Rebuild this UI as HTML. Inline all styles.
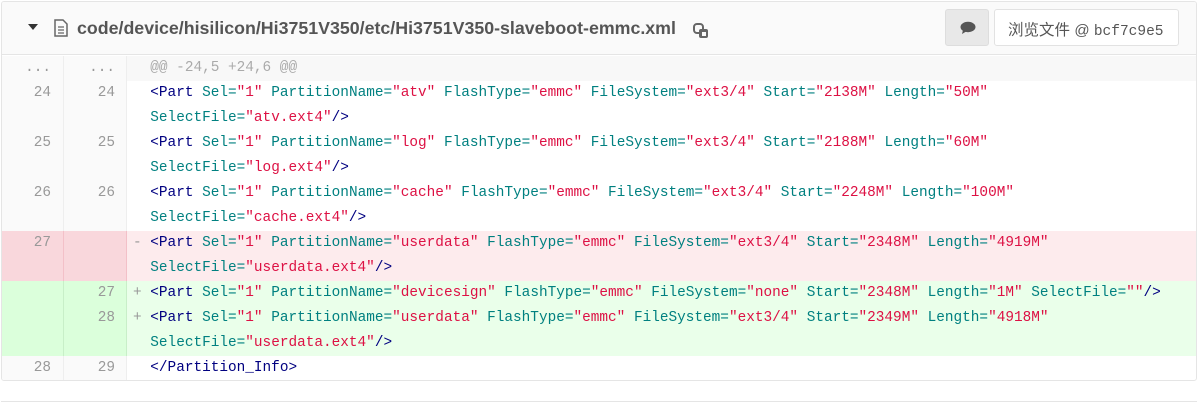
<!DOCTYPE html>
<html><head><meta charset="utf-8"><style>
*{margin:0;padding:0;box-sizing:border-box}
body{width:1198px;height:403px;background:#fff;font-family:"Liberation Sans",sans-serif;position:relative;overflow:hidden}
.box{position:absolute;left:1px;top:1px;width:1196px;height:380px;border:1px solid #e5e5e5;border-radius:3px;overflow:hidden}
.hdr{position:absolute;left:0;top:0;width:100%;height:53px;background:#fafafa;border-bottom:1px solid #e5e5e5}
.title{position:absolute;left:75px;top:16px;font-weight:bold;font-size:17.8px;color:#555;white-space:nowrap}
.tri{position:absolute;left:26px;top:22px;width:0;height:0;border-left:5px solid transparent;border-right:5px solid transparent;border-top:6px solid #333}
.btn1{position:absolute;left:943px;top:7px;width:44px;height:37px;background:#e8e8e8;border:1px solid #ddd;border-radius:3px}
.btn2{position:absolute;left:992px;top:7px;width:185px;height:37px;background:#fff;border:1px solid #e2e2e2;border-radius:3px;font-size:15.5px;color:#555;padding:8px 0 0 13px;white-space:nowrap;font-family:"Liberation Sans","Noto Sans CJK SC",sans-serif}
.btn2 .m{font-family:"Liberation Mono",monospace;font-size:14.5px}
.row{position:absolute;left:0;width:100%;height:25px;font-family:"Liberation Mono",monospace;font-size:14.4px;line-height:25px;white-space:pre}
.g1,.g2{position:absolute;top:0;height:25px;color:#999;text-align:right;border-right:1px solid #eee;background:#fafafa}
.g1{left:0;width:62px;padding-right:12px}
.g2{left:62px;width:63px;padding-right:11px}
.c{position:absolute;left:131px;top:0}
.t{color:#000080}.a{color:#008080}.s{color:#dd1144}.p{color:#999}
.del{background:#fdebed}.del .g1,.del .g2{background:#f9d7dc;border-right-color:#f3c0c8;color:#999}
.add{background:#eaffea}.add .g1,.add .g2{background:#dbffdb;border-right-color:#c8efc8;color:#999}
.hunk{background:#f8f8f8}.hunk .c{color:#aaa}
</style></head><body>
<div class="box">
<div class="hdr">
<div class="tri"></div>
<svg style="position:absolute;left:52px;top:17px" width="14" height="18" viewBox="0 0 14 18"><path d="M1 1h8l4 4v12H1z" fill="none" stroke="#666" stroke-width="1.5"/><path d="M4 8h6M4 11h6M4 14h6" stroke="#666" stroke-width="1.3"/></svg>
<div class="title">code/device/hisilicon/Hi3751V350/etc/Hi3751V350-slaveboot-emmc.xml</div>
<svg style="position:absolute;left:691px;top:21px" width="17" height="16" viewBox="0 0 17 16"><rect x="1" y="1" width="9" height="9" rx="3" fill="none" stroke="#666" stroke-width="2"/><rect x="6" y="6" width="9" height="9" rx="2" fill="#666"/><rect x="9" y="9" width="4" height="4" fill="#fafafa"/></svg>
<div class="btn1"><svg style="position:absolute;left:14px;top:11px" width="16" height="14" viewBox="0 0 16 14"><ellipse cx="8" cy="6" rx="7.5" ry="5.2" fill="#555"/><path d="M3 9l-1 4 5-3z" fill="#555"/></svg></div>
<div class="btn2">浏览文件 <span style="font-size:15px">@</span> <span class="m">bcf7c9e5</span></div>
</div>
<div class="row hunk" style="top:54px"><div class="g1">...</div><div class="g2">...</div><div class="c">  @@ -24,5 +24,6 @@</div></div>
<div class="row" style="top:79px"><div class="g1">24</div><div class="g2">24</div><div class="c">  <span class="t">&lt;Part</span> <span class="a">Sel=</span><span class="s">"1"</span> <span class="a">PartitionName=</span><span class="s">"atv"</span> <span class="a">FlashType=</span><span class="s">"emmc"</span> <span class="a">FileSystem=</span><span class="s">"ext3/4"</span> <span class="a">Start=</span><span class="s">"2138M"</span> <span class="a">Length=</span><span class="s">"50M"</span></div></div>
<div class="row" style="top:104px"><div class="g1"></div><div class="g2"></div><div class="c">  <span class="a">SelectFile=</span><span class="s">"atv.ext4"</span><span class="t">/&gt;</span></div></div>
<div class="row" style="top:129px"><div class="g1">25</div><div class="g2">25</div><div class="c">  <span class="t">&lt;Part</span> <span class="a">Sel=</span><span class="s">"1"</span> <span class="a">PartitionName=</span><span class="s">"log"</span> <span class="a">FlashType=</span><span class="s">"emmc"</span> <span class="a">FileSystem=</span><span class="s">"ext3/4"</span> <span class="a">Start=</span><span class="s">"2188M"</span> <span class="a">Length=</span><span class="s">"60M"</span></div></div>
<div class="row" style="top:154px"><div class="g1"></div><div class="g2"></div><div class="c">  <span class="a">SelectFile=</span><span class="s">"log.ext4"</span><span class="t">/&gt;</span></div></div>
<div class="row" style="top:179px"><div class="g1">26</div><div class="g2">26</div><div class="c">  <span class="t">&lt;Part</span> <span class="a">Sel=</span><span class="s">"1"</span> <span class="a">PartitionName=</span><span class="s">"cache"</span> <span class="a">FlashType=</span><span class="s">"emmc"</span> <span class="a">FileSystem=</span><span class="s">"ext3/4"</span> <span class="a">Start=</span><span class="s">"2248M"</span> <span class="a">Length=</span><span class="s">"100M"</span></div></div>
<div class="row" style="top:204px"><div class="g1"></div><div class="g2"></div><div class="c">  <span class="a">SelectFile=</span><span class="s">"cache.ext4"</span><span class="t">/&gt;</span></div></div>
<div class="row del" style="top:229px"><div class="g1">27</div><div class="g2"></div><div class="c"><span class="p">-</span> <span class="t">&lt;Part</span> <span class="a">Sel=</span><span class="s">"1"</span> <span class="a">PartitionName=</span><span class="s">"userdata"</span> <span class="a">FlashType=</span><span class="s">"emmc"</span> <span class="a">FileSystem=</span><span class="s">"ext3/4"</span> <span class="a">Start=</span><span class="s">"2348M"</span> <span class="a">Length=</span><span class="s">"4919M"</span></div></div>
<div class="row del" style="top:254px"><div class="g1"></div><div class="g2"></div><div class="c">  <span class="a">SelectFile=</span><span class="s">"userdata.ext4"</span><span class="t">/&gt;</span></div></div>
<div class="row add" style="top:279px"><div class="g1"></div><div class="g2">27</div><div class="c"><span class="p">+</span> <span class="t">&lt;Part</span> <span class="a">Sel=</span><span class="s">"1"</span> <span class="a">PartitionName=</span><span class="s">"devicesign"</span> <span class="a">FlashType=</span><span class="s">"emmc"</span> <span class="a">FileSystem=</span><span class="s">"none"</span> <span class="a">Start=</span><span class="s">"2348M"</span> <span class="a">Length=</span><span class="s">"1M"</span> <span class="a">SelectFile=</span><span class="s">""</span><span class="t">/&gt;</span></div></div>
<div class="row add" style="top:304px"><div class="g1"></div><div class="g2">28</div><div class="c"><span class="p">+</span> <span class="t">&lt;Part</span> <span class="a">Sel=</span><span class="s">"1"</span> <span class="a">PartitionName=</span><span class="s">"userdata"</span> <span class="a">FlashType=</span><span class="s">"emmc"</span> <span class="a">FileSystem=</span><span class="s">"ext3/4"</span> <span class="a">Start=</span><span class="s">"2349M"</span> <span class="a">Length=</span><span class="s">"4918M"</span></div></div>
<div class="row add" style="top:329px"><div class="g1"></div><div class="g2"></div><div class="c">  <span class="a">SelectFile=</span><span class="s">"userdata.ext4"</span><span class="t">/&gt;</span></div></div>
<div class="row" style="top:354px"><div class="g1">28</div><div class="g2">29</div><div class="c">  <span class="t">&lt;/Partition_Info&gt;</span></div></div>
</div>
<div style="position:absolute;left:1px;top:401px;width:1196px;height:2px;border-top:1px solid #e5e5e5"></div>
</body></html>
